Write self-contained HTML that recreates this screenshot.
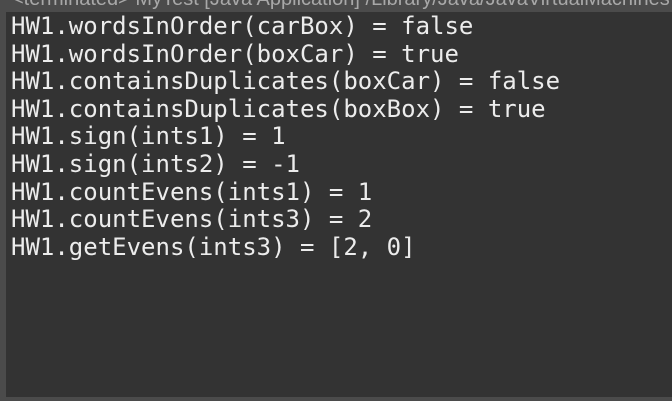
<!DOCTYPE html>
<html><head><style>
html,body{margin:0;padding:0;}
body{width:672px;height:401px;background:#4b4b4b;position:relative;overflow:hidden;}
.hdr{position:absolute;left:12px;top:-12px;font:20px "Liberation Sans",sans-serif;color:#a8a8a8;white-space:nowrap;}
.con{position:absolute;left:6px;top:12px;right:0;height:385px;background:#333333;}
pre{margin:0;position:absolute;left:11px;top:13px;font:24px/27.6px "DejaVu Sans Mono",monospace;color:#ececec;}
</style></head><body>
<div class="hdr">&lt;terminated&gt; MyTest [Java Application] /Library/Java/JavaVirtualMachines</div>
<div class="con"></div>
<pre>HW1.wordsInOrder(carBox) = false
HW1.wordsInOrder(boxCar) = true
HW1.containsDuplicates(boxCar) = false
HW1.containsDuplicates(boxBox) = true
HW1.sign(ints1) = 1
HW1.sign(ints2) = -1
HW1.countEvens(ints1) = 1
HW1.countEvens(ints3) = 2
HW1.getEvens(ints3) = [2, 0]</pre>
</body></html>
